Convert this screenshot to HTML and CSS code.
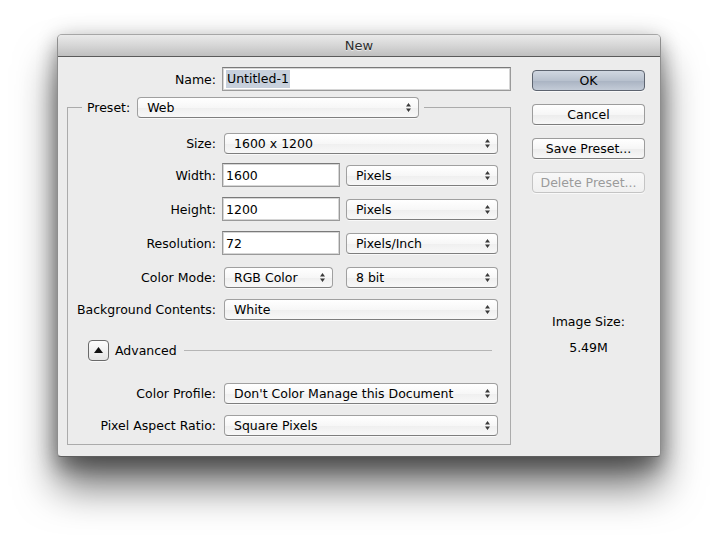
FILE: index.html
```html
<!DOCTYPE html>
<html>
<head>
<meta charset="utf-8">
<title>New</title>
<link rel="stylesheet" href="styles.css">
</head>
<body>
<div class="stage">
  <div class="window">
    <div class="titlebar">New</div>
    <div class="content">
      <div class="main">
        <div class="name-row">
          <span class="lbl">Name:</span>
          <div class="field name-field"><span class="sel">Untitled-1</span></div>
        </div>
        <fieldset class="group">
          <legend class="group-legend">
            <div class="legend-inner">
              <span class="legend-lbl">Preset:</span>
              <div class="popup preset"><span>Web</span><svg class="arr" width="5" height="9" viewBox="0 0 5 9"><path d="M2.5 0L5 3.5H0Z M2.5 9L0 5.5H5Z" fill="#3a3a3a"/></svg></div>
            </div>
          </legend>
          <div class="rows">
            <div class="row">
              <span class="lbl">Size:</span>
              <div class="popup w-full"><span>1600 x 1200</span><svg class="arr" width="5" height="9" viewBox="0 0 5 9"><path d="M2.5 0L5 3.5H0Z M2.5 9L0 5.5H5Z" fill="#3a3a3a"/></svg></div>
            </div>
            <div class="row">
              <span class="lbl">Width:</span>
              <div class="field small"><span>1600</span></div>
              <div class="popup unit"><span>Pixels</span><svg class="arr" width="5" height="9" viewBox="0 0 5 9"><path d="M2.5 0L5 3.5H0Z M2.5 9L0 5.5H5Z" fill="#3a3a3a"/></svg></div>
            </div>
            <div class="row gap10">
              <span class="lbl">Height:</span>
              <div class="field small"><span>1200</span></div>
              <div class="popup unit"><span>Pixels</span><svg class="arr" width="5" height="9" viewBox="0 0 5 9"><path d="M2.5 0L5 3.5H0Z M2.5 9L0 5.5H5Z" fill="#3a3a3a"/></svg></div>
            </div>
            <div class="row gap10">
              <span class="lbl">Resolution:</span>
              <div class="field small"><span>72</span></div>
              <div class="popup unit"><span>Pixels/Inch</span><svg class="arr" width="5" height="9" viewBox="0 0 5 9"><path d="M2.5 0L5 3.5H0Z M2.5 9L0 5.5H5Z" fill="#3a3a3a"/></svg></div>
            </div>
            <div class="row gap10">
              <span class="lbl">Color Mode:</span>
              <div class="popup mode"><span>RGB Color</span><svg class="arr" width="5" height="9" viewBox="0 0 5 9"><path d="M2.5 0L5 3.5H0Z M2.5 9L0 5.5H5Z" fill="#3a3a3a"/></svg></div>
              <div class="popup unit bits"><span>8 bit</span><svg class="arr" width="5" height="9" viewBox="0 0 5 9"><path d="M2.5 0L5 3.5H0Z M2.5 9L0 5.5H5Z" fill="#3a3a3a"/></svg></div>
            </div>
            <div class="row">
              <span class="lbl">Background Contents:</span>
              <div class="popup w-full"><span>White</span><svg class="arr" width="5" height="9" viewBox="0 0 5 9"><path d="M2.5 0L5 3.5H0Z M2.5 9L0 5.5H5Z" fill="#3a3a3a"/></svg></div>
            </div>
            <div class="adv-row">
              <div class="disclosure"><svg width="9" height="6" viewBox="0 0 9 6"><path d="M4.5 0L9 6H0Z" fill="#111"/></svg></div>
              <span class="adv-text">Advanced</span>
              <div class="adv-line"></div>
            </div>
            <div class="row cp">
              <span class="lbl">Color Profile:</span>
              <div class="popup w-full"><span>Don't Color Manage this Document</span><svg class="arr" width="5" height="9" viewBox="0 0 5 9"><path d="M2.5 0L5 3.5H0Z M2.5 9L0 5.5H5Z" fill="#3a3a3a"/></svg></div>
            </div>
            <div class="row">
              <span class="lbl">Pixel Aspect Ratio:</span>
              <div class="popup w-full"><span>Square Pixels</span><svg class="arr" width="5" height="9" viewBox="0 0 5 9"><path d="M2.5 0L5 3.5H0Z M2.5 9L0 5.5H5Z" fill="#3a3a3a"/></svg></div>
            </div>
          </div>
        </fieldset>
      </div>
      <div class="side">
        <div class="btn default">OK</div>
        <div class="btn">Cancel</div>
        <div class="btn">Save Preset...</div>
        <div class="btn disabled">Delete Preset...</div>
        <div class="img-size">
          <div>Image Size:</div>
          <div class="img-val">5.49M</div>
        </div>
      </div>
    </div>
  </div>
</div>
</body>
</html>
```
FILE: styles.css
```css
html, body {
  margin: 0;
  background: #ffffff;
}
body {
  font-family: "DejaVu Sans", "Noto Sans", sans-serif;
  font-size: 12.5px;
  color: #000;
}
.stage {
  box-sizing: border-box;
  min-height: 535px;
  padding: 34px 0 0 57px;
}
.window {
  width: 604px;
  height: 423px;
  box-sizing: border-box;
  background: #ececec;
  border: 1px solid #8e8e8e;
  border-top-color: #a6a6a6;
  border-bottom-color: #5e5e5e;
  border-radius: 5px 5px 4px 4px;
  box-shadow: 0 30px 40px rgba(0, 0, 0, 0.55), 0 12px 20px rgba(0, 0, 0, 0.3), 0 0 22px rgba(0, 0, 0, 0.15);
  display: flex;
  flex-direction: column;
  overflow: hidden;
}
.titlebar {
  height: 21px;
  line-height: 21px;
  flex: none;
  text-align: center;
  font-size: 13px;
  color: #2e2e2e;
  text-shadow: 0 1px 0 rgba(255, 255, 255, 0.6);
  background: linear-gradient(#eaeaea, #d6d6d6 50%, #bfbfbf);
  border-bottom: 1px solid #5a5a5a;
}
.content {
  display: flex;
  padding: 10px 15px 0 9px;
}
.main {
  width: 444px;
  flex: none;
}
.lbl {
  width: 148px;
  flex: none;
  text-align: right;
  margin-right: 6px;
  white-space: nowrap;
}
.name-row {
  display: flex;
  align-items: center;
  height: 24px;
}
.name-row .lbl {
  width: 149px;
}
.field {
  box-sizing: border-box;
  flex: none;
  height: 24px;
  background: #fff;
  border: 1px solid #9a9a9a;
  border-top-color: #7a7a7a;
  box-shadow: inset 0 0 0 1px #d6d6d6;
  display: flex;
  align-items: center;
  padding-left: 3px;
}
.name-field {
  width: 289px;
}
.sel {
  background: #c7d0dc;
  padding: 1px 1px 2px 1px;
}
.field.small {
  width: 118px;
  padding-left: 3px;
}
.group {
  margin: 6px 0 0 0;
  padding: 0;
  border: 1px solid #ababab;
  min-inline-size: 0;
}
.group-legend {
  margin-left: 14px;
  padding: 0 5px;
}
.legend-inner {
  display: flex;
  align-items: center;
  height: 21px;
}
.legend-lbl {
  margin-right: 7px;
}
.popup {
  box-sizing: border-box;
  flex: none;
  height: 21px;
  display: flex;
  align-items: center;
  justify-content: space-between;
  padding: 0 7px 0 9px;
  background: linear-gradient(#ffffff, #f7f7f7 50%, #efefef 51%, #f8f8f8);
  border: 1px solid #a0a0a0;
  border-bottom-color: #7e7e7e;
  border-radius: 4px;
  box-shadow: 0 1px 0 rgba(255, 255, 255, 0.7);
  white-space: nowrap;
}
.arr {
  flex: none;
}
.preset {
  width: 282px;
}
.rows {
  padding: 13px 12px 7px 0;
}
.row {
  display: flex;
  align-items: center;
  height: 24px;
  margin-top: 8px;
}
.row:first-child {
  margin-top: 0;
}
.row.gap10 {
  margin-top: 10px;
}
.w-full {
  width: 274px;
  margin-left: 2px;
}
.unit {
  width: 152px;
  margin-left: 6px;
}
.mode {
  width: 109px;
  margin-left: 2px;
}
.bits {
  margin-left: 13px;
}
.adv-row {
  display: flex;
  align-items: center;
  height: 22px;
  margin-top: 18px;
  padding-left: 20px;
}
.disclosure {
  box-sizing: border-box;
  width: 21px;
  height: 21px;
  border: 1px solid #6a6a6a;
  border-radius: 4px;
  background: linear-gradient(#fdfdfd, #e4e4e4);
  display: flex;
  align-items: center;
  justify-content: center;
  box-shadow: 0 1px 0 rgba(255, 255, 255, 0.7);
}
.adv-text {
  margin-left: 6px;
}
.adv-line {
  flex: 1;
  height: 1px;
  background: #b5b5b5;
  margin: 0 6px 0 7px;
}
.row.cp {
  margin-top: 20px;
}
.side {
  margin-left: 21px;
  width: 113px;
  flex: none;
  display: flex;
  flex-direction: column;
  padding-top: 3px;
}
.btn {
  box-sizing: border-box;
  height: 21px;
  margin-bottom: 13px;
  display: flex;
  align-items: center;
  justify-content: center;
  background: linear-gradient(#ffffff, #f6f6f6 50%, #ececec 51%, #f7f7f7);
  border: 1px solid #9c9c9c;
  border-bottom-color: #7c7c7c;
  border-radius: 4px;
  box-shadow: 0 1px 0 rgba(255, 255, 255, 0.7);
}
.btn.default {
  background: linear-gradient(#d0d7e1, #b8c1ce 50%, #a9b3c2 51%, #c3cbd7);
  border-color: #5d6470;
}
.btn.disabled {
  color: #9b9b9b;
  border-color: #c4c4c4;
  background: linear-gradient(#f8f8f8, #f0f0f0);
}
.img-size {
  margin-top: 108px;
  text-align: center;
  line-height: 16px;
}
.img-val {
  margin-top: 10px;
}
```
